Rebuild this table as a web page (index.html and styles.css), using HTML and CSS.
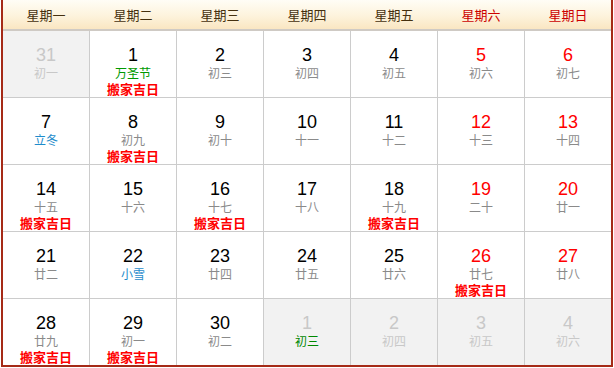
FILE: index.html
```html
<!DOCTYPE html>
<html lang="zh-CN">
<head>
<meta charset="utf-8">
<title>2010年11月</title>
<link rel="stylesheet" href="styles.css">
</head>
<body>
<div class="cal">
  <div class="head">
    <div>星期一</div><div>星期二</div><div>星期三</div><div>星期四</div><div>星期五</div><div class="we">星期六</div><div class="we">星期日</div>
  </div>
  <div class="grid">
    <div class="cell other"><span class="num">31</span><span class="lun">初一</span></div>
    <div class="cell"><span class="num">1</span><span class="lun fest">万圣节</span><span class="ji">搬家吉日</span></div>
    <div class="cell"><span class="num">2</span><span class="lun">初三</span></div>
    <div class="cell"><span class="num">3</span><span class="lun">初四</span></div>
    <div class="cell"><span class="num">4</span><span class="lun">初五</span></div>
    <div class="cell wk"><span class="num">5</span><span class="lun">初六</span></div>
    <div class="cell wk"><span class="num">6</span><span class="lun">初七</span></div>

    <div class="cell"><span class="num">7</span><span class="lun term">立冬</span></div>
    <div class="cell"><span class="num">8</span><span class="lun">初九</span><span class="ji">搬家吉日</span></div>
    <div class="cell"><span class="num">9</span><span class="lun">初十</span></div>
    <div class="cell"><span class="num">10</span><span class="lun">十一</span></div>
    <div class="cell"><span class="num">11</span><span class="lun">十二</span></div>
    <div class="cell wk"><span class="num">12</span><span class="lun">十三</span></div>
    <div class="cell wk"><span class="num">13</span><span class="lun">十四</span></div>

    <div class="cell"><span class="num">14</span><span class="lun">十五</span><span class="ji">搬家吉日</span></div>
    <div class="cell"><span class="num">15</span><span class="lun">十六</span></div>
    <div class="cell"><span class="num">16</span><span class="lun">十七</span><span class="ji">搬家吉日</span></div>
    <div class="cell"><span class="num">17</span><span class="lun">十八</span></div>
    <div class="cell"><span class="num">18</span><span class="lun">十九</span><span class="ji">搬家吉日</span></div>
    <div class="cell wk"><span class="num">19</span><span class="lun">二十</span></div>
    <div class="cell wk"><span class="num">20</span><span class="lun">廿一</span></div>

    <div class="cell"><span class="num">21</span><span class="lun">廿二</span></div>
    <div class="cell"><span class="num">22</span><span class="lun term">小雪</span></div>
    <div class="cell"><span class="num">23</span><span class="lun">廿四</span></div>
    <div class="cell"><span class="num">24</span><span class="lun">廿五</span></div>
    <div class="cell"><span class="num">25</span><span class="lun">廿六</span></div>
    <div class="cell wk"><span class="num">26</span><span class="lun">廿七</span><span class="ji">搬家吉日</span></div>
    <div class="cell wk"><span class="num">27</span><span class="lun">廿八</span></div>

    <div class="cell"><span class="num">28</span><span class="lun">廿九</span><span class="ji">搬家吉日</span></div>
    <div class="cell"><span class="num">29</span><span class="lun">初一</span><span class="ji">搬家吉日</span></div>
    <div class="cell"><span class="num">30</span><span class="lun">初二</span></div>
    <div class="cell other"><span class="num">1</span><span class="lun fest">初三</span></div>
    <div class="cell other"><span class="num">2</span><span class="lun">初四</span></div>
    <div class="cell other"><span class="num">3</span><span class="lun">初五</span></div>
    <div class="cell other"><span class="num">4</span><span class="lun">初六</span></div>
  </div>
</div>
</body>
</html>
```

FILE: styles.css
```css
html, body {
  margin: 0;
  padding: 0;
  background: #ffffff;
}
body {
  font-family: "Noto Sans CJK SC", "Liberation Sans", sans-serif;
}
.cal {
  margin-left: 1px;
  width: 608px;
  border-left: 2px solid #a52a17;
  border-right: 2px solid #a52a17;
  border-bottom: 2px solid #a52a17;
}
.head {
  display: grid;
  grid-template-columns: repeat(7, 1fr);
  column-gap: 1px;
  height: 29px;
  background: linear-gradient(to bottom, #fffdf6 0%, #fdf3dc 55%, #fae6c2 100%);
  border-bottom: 2px solid #cfcac4;
}
.head div {
  text-align: center;
  line-height: 29px;
  font-size: 13px;
  color: #45300e;
}
.head .we {
  color: #cc0000;
}
.grid {
  display: grid;
  grid-template-columns: repeat(7, 1fr);
  grid-auto-rows: 66px;
  gap: 1px;
  background: #cccccc;
}
.cell {
  background: #ffffff;
  display: flex;
  flex-direction: column;
  align-items: center;
  padding-top: 15px;
  box-sizing: border-box;
}
.num {
  font-family: "Liberation Sans", Arial, sans-serif;
  font-size: 18px;
  line-height: 19px;
  color: #000000;
}
.lun {
  font-size: 12px;
  line-height: 16px;
  color: #8a8a8a;
}
.ji {
  font-size: 13px;
  font-weight: bold;
  line-height: 16px;
  color: #ff0000;
}
.fest {
  color: #009900;
}
.term {
  color: #1e8ccc;
}
.wk .num {
  color: #ff0000;
}
.other {
  background: #f2f2f2;
}
.other .num,
.other .lun {
  color: #c8c8c8;
}
.other .lun.fest {
  color: #008800;
}
```
